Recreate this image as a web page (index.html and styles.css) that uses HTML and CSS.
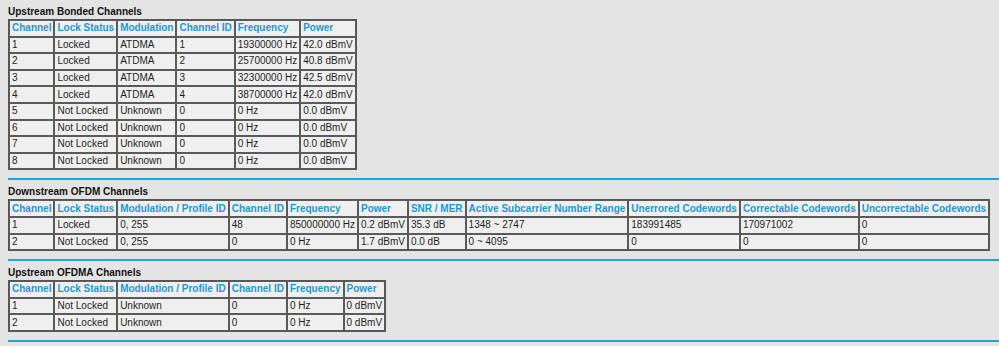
FILE: index.html
```html
<!DOCTYPE html>
<html>
<head>
<meta charset="utf-8">
<link rel="stylesheet" href="styles.css">
</head>
<body>
<div class="page">
  <section class="sec">
    <h2 class="title">Upstream Bonded Channels</h2>
    <table class="grid">
      <tr><th>Channel</th><th>Lock Status</th><th>Modulation</th><th>Channel ID</th><th>Frequency</th><th>Power</th></tr>
      <tr><td>1</td><td>Locked</td><td>ATDMA</td><td>1</td><td>19300000 Hz</td><td>42.0 dBmV</td></tr>
      <tr><td>2</td><td>Locked</td><td>ATDMA</td><td>2</td><td>25700000 Hz</td><td>40.8 dBmV</td></tr>
      <tr><td>3</td><td>Locked</td><td>ATDMA</td><td>3</td><td>32300000 Hz</td><td>42.5 dBmV</td></tr>
      <tr><td>4</td><td>Locked</td><td>ATDMA</td><td>4</td><td>38700000 Hz</td><td>42.0 dBmV</td></tr>
      <tr><td>5</td><td>Not Locked</td><td>Unknown</td><td>0</td><td>0 Hz</td><td>0.0 dBmV</td></tr>
      <tr><td>6</td><td>Not Locked</td><td>Unknown</td><td>0</td><td>0 Hz</td><td>0.0 dBmV</td></tr>
      <tr><td>7</td><td>Not Locked</td><td>Unknown</td><td>0</td><td>0 Hz</td><td>0.0 dBmV</td></tr>
      <tr><td>8</td><td>Not Locked</td><td>Unknown</td><td>0</td><td>0 Hz</td><td>0.0 dBmV</td></tr>
    </table>
    <div class="rule"></div>
  </section>
  <section class="sec">
    <h2 class="title">Downstream OFDM Channels</h2>
    <table class="grid">
      <tr><th>Channel</th><th>Lock Status</th><th>Modulation / Profile ID</th><th>Channel ID</th><th>Frequency</th><th>Power</th><th>SNR / MER</th><th>Active Subcarrier Number Range</th><th>Unerrored Codewords</th><th>Correctable Codewords</th><th>Uncorrectable Codewords</th></tr>
      <tr><td>1</td><td>Locked</td><td>0, 255</td><td>48</td><td>850000000 Hz</td><td>0.2 dBmV</td><td>35.3 dB</td><td>1348 ~ 2747</td><td>183991485</td><td>170971002</td><td>0</td></tr>
      <tr><td>2</td><td>Not Locked</td><td>0, 255</td><td>0</td><td>0 Hz</td><td>1.7 dBmV</td><td>0.0 dB</td><td>0 ~ 4095</td><td>0</td><td>0</td><td>0</td></tr>
    </table>
    <div class="rule"></div>
  </section>
  <section class="sec">
    <h2 class="title">Upstream OFDMA Channels</h2>
    <table class="grid">
      <tr><th>Channel</th><th>Lock Status</th><th>Modulation / Profile ID</th><th>Channel ID</th><th>Frequency</th><th>Power</th></tr>
      <tr><td>1</td><td>Not Locked</td><td>Unknown</td><td>0</td><td>0 Hz</td><td>0 dBmV</td></tr>
      <tr><td>2</td><td>Not Locked</td><td>Unknown</td><td>0</td><td>0 Hz</td><td>0 dBmV</td></tr>
    </table>
    <div class="rule"></div>
  </section>
</div>
</body>
</html>
```

FILE: styles.css
```css
html, body {
  margin: 0;
  padding: 0;
  background: #e4e4e4;
}
body {
  font-family: "Liberation Sans", Arial, sans-serif;
  font-size: 10px;
  color: #1e1e1e;
}
.page {
  padding: 0 0 0 8px;
}
.sec {
  padding-top: 6px;
}
.title {
  margin: 0 0 1px 0;
  font-size: 10px;
  line-height: 12px;
  font-weight: bold;
  color: #111;
}
.grid {
  border-collapse: separate;
  border-spacing: 0;
  border: 1px solid #555;
  background: #efefef;
}
.grid th, .grid td {
  border: 1px solid #5a5a5a;
  padding: 1.3px 2px;
  line-height: 12px;
  text-align: left;
  white-space: nowrap;
  font-size: 10px;
}
.grid th {
  color: #1c99d4;
  font-weight: bold;
}
.grid td {
  font-weight: normal;
  color: #1e1e1e;
}
.rule {
  margin-top: 8px;
  height: 2px;
  background: #20a2da;
}
```
